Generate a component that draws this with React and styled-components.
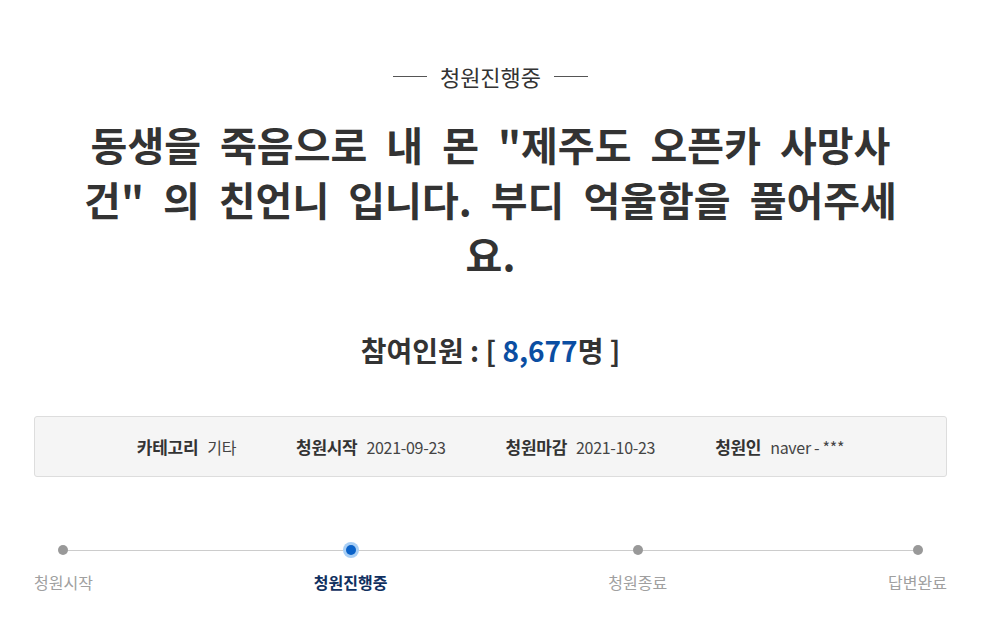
import styled, { createGlobalStyle } from "styled-components"

const GlobalStyle = createGlobalStyle`
  body {
    margin: 0;
    background: #ffffff;
    font-family: "Noto Sans CJK KR", "Noto Sans", sans-serif;
    color: #333333;
  }
`

const steps = [
  { name: "청원시작" },
  { name: "청원진행중", active: true },
  { name: "청원종료" },
  { name: "답변완료" },
]

const info = [
  { label: "카테고리", value: "기타" },
  { label: "청원시작", value: "2021-09-23" },
  { label: "청원마감", value: "2021-10-23" },
  { label: "청원인", value: "naver - ***" },
]

export default function App() {
  return (
    <>
      <GlobalStyle />
      <Page>
        <Status>청원진행중</Status>
        <Title>
          동생을 죽음으로 내 몬 "제주도 오픈카 사망사건" 의 친언니 입니다. 부디 억울함을 풀어주세요.
        </Title>
        <Count>
          참여인원 : [ <Num>8,677</Num>명 ]
        </Count>
        <InfoBox>
          {info.map((item) => (
            <InfoItem key={item.label}>
              <b>{item.label}</b>
              <span>{item.value}</span>
            </InfoItem>
          ))}
        </InfoBox>
        <Progress>
          {steps.map((s) => (
            <Step key={s.name} $active={s.active}>
              <Dot $active={s.active} />
              <StepName $active={s.active}>{s.name}</StepName>
            </Step>
          ))}
        </Progress>
      </Page>
    </>
  )
}

const Page = styled.div`
  width: 913px;
  margin: 0 auto;
  padding: 61px 0 0;
  display: flex;
  flex-direction: column;
  align-items: center;
`

const Status = styled.div`
  display: flex;
  align-items: center;
  gap: 13px;
  font-size: 22px;
  line-height: 30px;
  color: #333;
  &::before, &::after {
    content: "";
    width: 34px;
    height: 1px;
    background: #555;
  }
`

const Title = styled.h1`
  margin: 26px 0 0;
  width: 830px;
  text-align: center;
  font-size: 40px;
  line-height: 55px;
  font-weight: 700;
  word-spacing: 10px;
  color: #333;
  word-break: break-all;
`

const Count = styled.div`
  margin-top: 50px;
  font-size: 28px;
  line-height: 36px;
  font-weight: 700;
  color: #333;
`

const Num = styled.span`
  color: #0b4ea2;
`

const InfoBox = styled.div`
  margin-top: 48px;
  box-sizing: border-box;
  width: 100%;
  height: 61px;
  border: 1px solid #dddddd;
  border-radius: 3px;
  background: #f5f5f5;
  display: flex;
  justify-content: center;
  align-items: center;
  gap: 60px;
`

const InfoItem = styled.div`
  display: flex;
  align-items: baseline;
  gap: 9px;
  font-size: 16px;
  letter-spacing: -0.3px;
  b { font-weight: 700; font-size: 17px; color: #333; }
  span { color: #444; }
`

const Progress = styled.div`
  position: relative;
  margin-top: 68px;
  width: 100%;
  display: flex;
  justify-content: space-between;
  &::before {
    content: "";
    position: absolute;
    left: 30px;
    right: 30px;
    top: 5px;
    height: 1px;
    background: #cccccc;
  }
`

const Step = styled.div`
  position: relative;
  display: flex;
  flex-direction: column;
  align-items: center;
  gap: 15px;
`

const Dot = styled.span`
  width: 10px;
  height: 10px;
  border-radius: 50%;
  background: ${(p) => (p.$active ? "#0a62c9" : "#999999")};
  box-shadow: ${(p) => (p.$active ? "0 0 0 3px #a9cff5" : "none")};
`

const StepName = styled.span`
  font-size: 16px;
  line-height: 24px;
  font-weight: ${(p) => (p.$active ? 700 : 400)};
  color: ${(p) => (p.$active ? "#10305f" : "#a0a0a0")};
`
